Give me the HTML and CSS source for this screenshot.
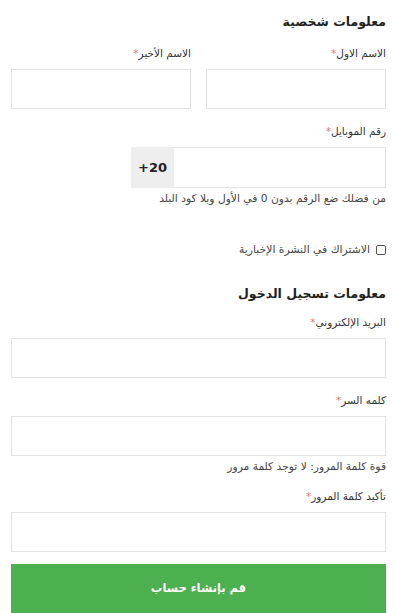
FILE: index.html
```html
<!DOCTYPE html>
<html lang="ar" dir="rtl">
<head>
<meta charset="utf-8">
<link rel="stylesheet" href="styles.css">
</head>
<body>
<form class="form">
  <h2 class="heading heading-first">معلومات شخصية</h2>
  <div class="row">
    <div class="field">
      <label class="label">الاسم الاول<span class="req">*</span></label>
      <div class="input"></div>
    </div>
    <div class="field">
      <label class="label">الاسم الأخير<span class="req">*</span></label>
      <div class="input"></div>
    </div>
  </div>
  <div class="field field-mobile">
    <label class="label">رقم الموبايل<span class="req">*</span></label>
    <div class="input phone">
      <span class="spacer"></span>
      <span class="prefix"><bdo dir="ltr">+20</bdo></span>
    </div>
    <p class="help">من فضلك ضع الرقم بدون 0 في الأول وبلا كود البلد</p>
  </div>
  <label class="check">
    <span class="box"></span>
    <span>الاشتراك في النشرة الإخبارية</span>
  </label>
  <h2 class="heading heading-second">معلومات تسجيل الدخول</h2>
  <div class="field field-email">
    <label class="label">البريد الإلكتروني<span class="req">*</span></label>
    <div class="input"></div>
  </div>
  <div class="field field-gap">
    <label class="label">كلمه السر<span class="req">*</span></label>
    <div class="input"></div>
    <p class="help">قوة كلمة المرور: لا توجد كلمة مرور</p>
  </div>
  <div class="field field-gap2">
    <label class="label">تأكيد كلمة المرور<span class="req">*</span></label>
    <div class="input"></div>
  </div>
  <button type="button" class="submit">قم بإنشاء حساب</button>
</form>
</body>
</html>
```
FILE: styles.css
```css
* { box-sizing: border-box; }
html, body { margin: 0; padding: 0; background: #fff; }
body {
  font-family: "DejaVu Sans", "Noto Sans", sans-serif;
  color: #333;
  overflow: hidden;
}
.form {
  margin: 0 7px 0 11px;
  display: flex;
  flex-direction: column;
}
.heading {
  margin: 0;
  font-size: 12.5px;
  font-weight: bold;
  color: #222;
  line-height: 20px;
}
.heading-first { margin-top: 12px; }
.heading-second { margin-top: 27px; }
.row {
  display: grid;
  grid-template-columns: 1fr 1fr;
  gap: 15px;
  margin-top: 13px;
}
.field { display: flex; flex-direction: column; }
.label {
  font-size: 10.5px;
  line-height: 16px;
  color: #333;
  margin-bottom: 8px;
}
.req { color: #e0787a; }
.input {
  height: 40px;
  border: 1px solid #e2e2e2;
  background: #fff;
}
.field-mobile { margin-top: 14px; }
.phone {
  display: flex;
  height: 41px;
  width: 255px;
}
.spacer { flex: 1; }
.prefix {
  width: 43px;
  background: #eeeeee;
  display: flex;
  align-items: center;
  justify-content: center;
  font-size: 13px;
  font-weight: bold;
  color: #222;
  margin: -1px 0 -1px -1px;
}
.help {
  margin: 4px 0 0;
  font-size: 10.7px;
  line-height: 14px;
  color: #444;
}
.check {
  display: flex;
  align-items: center;
  gap: 6px;
  margin-top: 37px;
  font-size: 10.8px;
  line-height: 14px;
  color: #444;
}
.box {
  width: 10px;
  height: 10px;
  border: 1px solid #555;
  border-radius: 2px;
}
.field-email { margin-top: 10px; }
.field-gap { margin-top: 14px; }
.field-gap2 { margin-top: 14px; }
.submit {
  margin-top: 12px;
  height: 50px;
  border: 0;
  background: #4caf50;
  color: #fff;
  font-family: inherit;
  font-size: 11.5px;
  font-weight: bold;
  padding-bottom: 4px;
}
```
